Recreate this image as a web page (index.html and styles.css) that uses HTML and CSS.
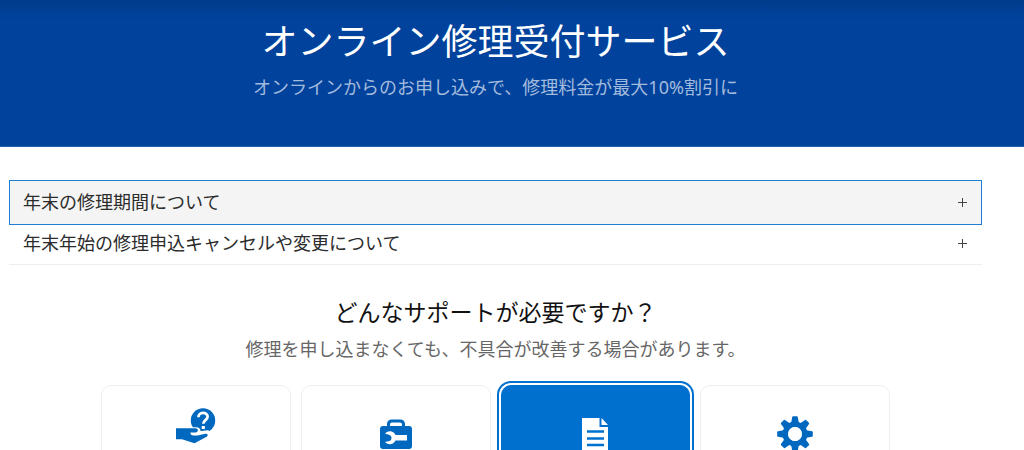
FILE: index.html
```html
<!DOCTYPE html>
<html lang="ja">

<head>
    <meta charset="UTF-8">
    <meta name="viewport" content="width=device-width, initial-scale=1.0">
    <title>オンライン修理受付サービス</title>
    <link rel="stylesheet" href="styles.css">
</head>

<body>

    <!-- Hero -->
    <header class="hero">
        <h1>オンライン修理受付サービス</h1>
        <p>オンラインからのお申し込みで、修理料金が最大10%割引に</p>
    </header>

    <main class="content">
        <!-- Notices -->
        <div class="accordion">
            <button type="button" class="accordion-item active" aria-expanded="false">
                <span>年末の修理期間について</span>
                <svg class="plus" viewBox="0 0 9 9" aria-hidden="true"><path d="M4.5 0v9M0 4.5h9"/></svg>
            </button>
            <button type="button" class="accordion-item" aria-expanded="false">
                <span>年末年始の修理申込キャンセルや変更について</span>
                <svg class="plus" viewBox="0 0 9 9" aria-hidden="true"><path d="M4.5 0v9M0 4.5h9"/></svg>
            </button>
        </div>

        <!-- Support menu -->
        <section class="support">
            <h2>どんなサポートが必要ですか？</h2>
            <p>修理を申し込まなくても、不具合が改善する場合があります。</p>
            <div class="cards">
                <a href="#help" class="card" aria-label="ヘルプ">
                    <svg class="icon icon-help" viewBox="0 0 40 36" aria-hidden="true">
                        <circle cx="27" cy="12.500" r="12.200" fill="currentColor"/>
                        <path d="M22.400 9.200c0-5.800 9.200-5.600 9.200-.6 0 3.600-4.300 3.400-4.300 7.200" fill="none" stroke="#fff" stroke-width="2.800"/>
                        <path d="M25.700 18h3.200v3h-3.200z" fill="#fff"/>
                        <path d="M1 20.500h19q3.500 0 3.500 4l8-1q1.500 0 1 2L18.700 34.500 6.500 31H1z" fill="#fff" stroke="#fff" stroke-width="2.600"/>
                        <path d="M0 20.200h19.500c3.200 0 3.200 4 0 4.200h-5q-.5 3 3.500 3h3.500l8-1.700q2.500-.3 2.200 1.500-.2 1-1.500 1.700L18.500 35.200 6 31.200H0z" fill="currentColor"/>
                    </svg>
                </a>
                <a href="#repair" class="card" aria-label="修理">
                    <svg class="icon" viewBox="0 0 34 34" aria-hidden="true">
                        <path d="M9.500 9V6.500q0-3.500 3.500-3.500h8q3.500 0 3.500 3.500V9" fill="none" stroke="currentColor" stroke-width="3"/>
                        <rect x="1" y="8" width="32" height="23" rx="3" fill="currentColor"/>
                        <path d="M6 15.500a6.200 6.200 0 0 1 10.500 1.500H28v5.500H16.500A6.200 6.200 0 0 1 6 24l4.500-1q2-.5 2-3t-2-3z" fill="#fff"/>
                    </svg>
                </a>
                <a href="#apply" class="card selected" aria-label="申し込み">
                    <svg class="icon" viewBox="0 0 34 34" aria-hidden="true">
                        <path d="M4 0h17.500v9H30v25H4z" fill="currentColor"/>
                        <path d="M23.500 0v7H30z" fill="currentColor"/>
                        <path d="M9 13.500h17M9 20.500h17M9 27h17" stroke="#0070ce" stroke-width="2.400"/>
                    </svg>
                </a>
                <a href="#settings" class="card" aria-label="設定">
                    <svg class="icon icon-gear" viewBox="-18 -18 36 36" aria-hidden="true">
                        <g fill="currentColor">
                            <path id="tooth" d="M-4-10l1.200-7q.2-.8 1-.8h3.600q.8 0 1 .8L4-10z"/>
                            <use href="#tooth" transform="rotate(45)"/>
                            <use href="#tooth" transform="rotate(90)"/>
                            <use href="#tooth" transform="rotate(135)"/>
                            <use href="#tooth" transform="rotate(180)"/>
                            <use href="#tooth" transform="rotate(225)"/>
                            <use href="#tooth" transform="rotate(270)"/>
                            <use href="#tooth" transform="rotate(315)"/>
                        </g>
                        <circle r="9.700" fill="none" stroke="currentColor" stroke-width="5.600"/>
                        <circle r="6.900" fill="#fff"/>
                    </svg>
                </a>
            </div>
        </section>
    </main>

</body>
</html>
```
FILE: styles.css
```css
* {
    box-sizing: border-box;
}

body {
    margin: 0;
    height: 100vh;
    overflow: hidden;
    background-color: #fff;
    color: #2c2c2c;
    font-family: "Noto Sans", "Noto Sans CJK JP", sans-serif;
    font-size: 18px;
}

h1, h2, p {
    margin: 0;
    font-weight: 400;
}

/* Hero */
.hero {
    height: 147px;
    padding: 16px 33px 0 0;
    background: linear-gradient(#003c8c, #00429c 20px);
    border-bottom: 1px solid #2460ae;
    color: #fff;
    text-align: center;
}

.hero h1 {
    font-size: 36px;
    line-height: 52px;
}

.hero p {
    margin-top: 6px;
    line-height: 26px;
    color: #a3bbdd;
}

.content {
    padding: 33px 42px 0 9px;
}

/* Accordion */
.accordion-item {
    display: flex;
    justify-content: space-between;
    align-items: center;
    width: 100%;
    height: 40px;
    padding: 0 15px 6px 14px;
    border: 0;
    border-bottom: 1px solid #eee;
    background: none;
    color: inherit;
    font: inherit;
    text-align: left;
    cursor: pointer;
}

.accordion-item.active {
    height: 45px;
    border: 1px solid #1e7fd2;
    padding: 0 14px 4px 13px;
    background-color: #f4f4f4;
}

.plus {
    width: 9px;
    height: 9px;
    margin-top: 4px;
    fill: none;
    stroke: #444;
}

/* Support menu */
.support {
    margin-top: 29px;
    text-align: center;
}

.support h2 {
    font-size: 23px;
    line-height: 36px;
    color: #111;
}

.support p {
    margin-top: 6px;
    line-height: 26px;
    color: #666;
}

.cards {
    display: grid;
    grid-template-columns: repeat(4, 1fr);
    gap: 10px;
    max-width: 789px;
    margin: 23px auto 0;
}

.card {
    height: 180px;
    padding-top: 22px;
    border: 1px solid #eee;
    border-radius: 10px;
    color: #0068be;
}

.card.selected {
    border-color: #0070ce;
    background-color: #0070ce;
    box-shadow: 0 0 0 2px #fff, 0 0 0 4px #0070ce;
    color: #fff;
}

.icon {
    display: block;
    width: 34px;
    height: 34px;
    margin: 10px auto 0;
}

.icon-help {
    width: 40px;
    height: 36px;
    margin-top: 0;
}

.icon-gear {
    width: 36px;
    height: 36px;
    margin-top: 8px;
}
```
